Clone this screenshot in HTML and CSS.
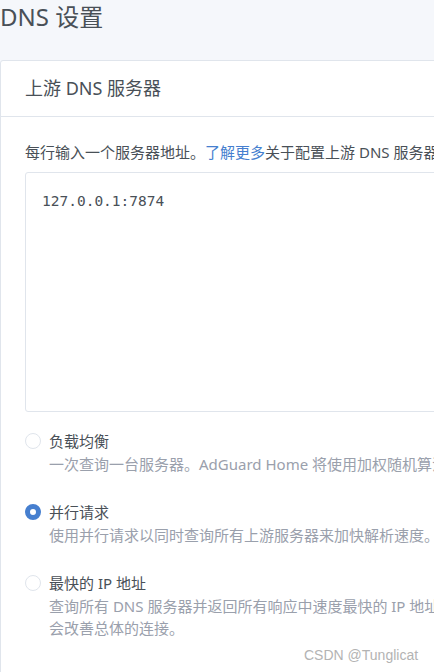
FILE: index.html
```html
<!DOCTYPE html>
<html lang="zh-CN">
    <head>
        <meta charset="utf-8">
        <title>DNS 设置</title>
        <link rel="stylesheet" href="styles.css">
    </head>
    <body>
        <div class="page">
            <h1 class="page-title">DNS 设置</h1>

            <div class="card">
                <div class="card-header">
                    <h3 class="card-title">上游 DNS 服务器</h3>
                </div>

                <div class="card-body">
                    <p class="hint">每行输入一个服务器地址。<a href="#">了解更多</a>关于配置上游 DNS 服务器的内容。</p>

                    <textarea class="upstream" spellcheck="false">127.0.0.1:7874</textarea>

                    <div class="modes">
                        <label class="mode">
                            <input type="radio" name="upstream-mode" value="load-balance">
                            <span class="mode-text">
                                <span class="mode-name">负载均衡</span>
                                <span class="mode-desc">一次查询一台服务器。AdGuard Home 将使用加权随机算法来选择服务器，以便更频繁地使用最快的服务器。</span>
                            </span>
                        </label>

                        <label class="mode">
                            <input type="radio" name="upstream-mode" value="parallel" checked>
                            <span class="mode-text">
                                <span class="mode-name">并行请求</span>
                                <span class="mode-desc">使用并行请求以同时查询所有上游服务器来加快解析速度。</span>
                            </span>
                        </label>

                        <label class="mode">
                            <input type="radio" name="upstream-mode" value="fastest">
                            <span class="mode-text">
                                <span class="mode-name">最快的 IP 地址</span>
                                <span class="mode-desc">查询所有 DNS 服务器并返回所有响应中速度最快的 IP 地址。这会减慢 DNS 查询，因为 AdGuard Home 必须等待所有 DNS 服务器的响应，但<br>会改善总体的连接。</span>
                            </span>
                        </label>
                    </div>
                </div>
            </div>
        </div>

        <div class="watermark">CSDN @Tunglicat</div>
    </body>
</html>
```

FILE: styles.css
```css
body{
    margin: 0;
    overflow: hidden;
    background-color: #f5f7fb;
    font-family: "Noto Sans", "Noto Sans CJK SC", sans-serif;
    font-size: 15px;
    line-height: 1.5;
    color: #495057;
}
.page{
    width: 900px;
}
.page-title{
    margin: 3px 0 28px 0;
    font-size: 24px;
    font-weight: 400;
    line-height: 1.2;
    color: #495057;
}
.card{
    background-color: #fff;
    border: 1px solid #e0e5ec;
    border-radius: 3px;
}
.card-header{
    display: flex;
    align-items: center;
    height: 55px;
    padding: 0 24px;
    border-bottom: 1px solid #e0e5ec;
}
.card-title{
    margin: 0;
    font-size: 18px;
    font-weight: 400;
    line-height: 1.2;
}
.card-body{
    padding: 24px 24px 80px 24px;
}
.hint{
    margin: 0 0 9px 0;
    white-space: nowrap;
}
.hint a{
    color: #467fcf;
    text-decoration: none;
}
.upstream{
    display: block;
    box-sizing: border-box;
    width: 100%;
    height: 240px;
    margin: 0;
    padding: 17px 16px;
    border: 1px solid #e0e5ec;
    border-radius: 3px;
    resize: none;
    outline: none;
    font-family: "DejaVu Sans Mono", monospace;
    font-size: 14.5px;
    line-height: 22.5px;
    color: #495057;
}
.modes{
    display: flex;
    flex-direction: column;
    gap: 26px;
    margin-top: 18px;
}
.mode{
    display: flex;
    gap: 8px;
}
.mode input{
    appearance: none;
    flex: none;
    box-sizing: border-box;
    width: 16px;
    height: 16px;
    margin: 3px 0 0 0;
    border: 1px solid #e0e5ec;
    border-radius: 50%;
    background-color: #fff;
}
.mode input:checked{
    border: 5px solid #467fcf;
    background-color: #fff;
}
.mode-text{
    display: flex;
    flex-direction: column;
}
.mode-name{
    color: #495057;
}
.mode-desc{
    color: #9aa0ac;
    white-space: nowrap;
}
.watermark{
    position: absolute;
    top: 645px;
    left: 304px;
    font-family: "Liberation Sans", Arial, sans-serif;
    font-size: 14px;
    color: #b3b3b3;
}
```
